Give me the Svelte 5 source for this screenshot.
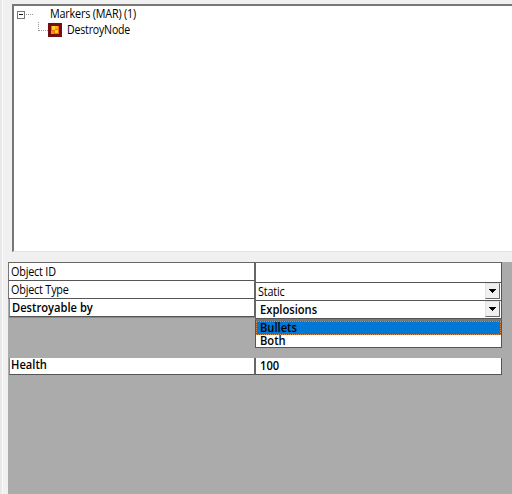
<script lang="ts">
  type Option = { label: string; active: boolean }

  let objectType = $state('Static')
  let destroyableBy = $state('Explosions')
  let health = $state(100)

  const options: Option[] = [
    { label: 'Bullets', active: true },
    { label: 'Both', active: false },
  ]
</script>

{#snippet arrow()}
  <div class="arrow">
    <svg width="7" height="4" viewBox="0 0 7 4" shape-rendering="crispEdges">
      <path d="M0 0H7V1H6V2H5V3H4V4H3V3H2V2H1V1H0Z" fill="#000" />
    </svg>
  </div>
{/snippet}

<div class="window">
  <div class="tree">
    <div class="node root">
      <svg width="16" height="18" viewBox="0 0 16 18" shape-rendering="crispEdges">
        <rect x="0.5" y="5.5" width="7" height="7" fill="#fff" stroke="#777" />
        <path d="M2 8.5H6" stroke="#111" />
        <path d="M9 8.5H16" stroke="#999" stroke-dasharray="1 1" />
      </svg>
      <span>Markers (MAR) (1)</span>
    </div>
    <div class="node child">
      <svg width="25" height="16" viewBox="0 0 25 16" shape-rendering="crispEdges">
        <path d="M0.5 0V9M1 8.5H10" fill="none" stroke="#999" stroke-dasharray="1 1" />
        <rect x="10" y="1" width="14" height="14" fill="#780d10" />
        <rect x="13" y="4" width="8" height="8" fill="#f06b0c" />
        <path d="M14 4H17V8H14ZM17 8H20V11H17Z" fill="#ffd51c" />
        <path d="M17 4H20V7H17Z" fill="#ffae12" />
        <path d="M13 9H16V12H13Z" fill="#f79313" />
      </svg>
      <span>DestroyNode</span>
    </div>
  </div>

  <div class="grid">
    <div class="names">
      <div class="cell first"><span>Object ID</span></div>
      <div class="cell"><span>Object Type</span></div>
      <div class="cell strong destroy"><span>Destroyable by</span></div>
      <div class="cell strong health"><span>Health</span></div>
    </div>
    <div class="values">
      <div class="cell empty"></div>
      <div class="cell combo"><span>{objectType}</span>{@render arrow()}</div>
      <div class="cell combo strong"><span>{destroyableBy}</span>{@render arrow()}</div>
      <div class="list strong">
        {#each options as option}
          <div class="option" class:active={option.active}><span>{option.label}</span></div>
        {/each}
      </div>
      <div class="cell strong amount"><span>{health}</span></div>
    </div>
  </div>
</div>

<style>
  .window {
    box-sizing: border-box;
    height: 494px;
    padding: 4px 0 0 8px;
    overflow: hidden;
    background: linear-gradient(90deg, #e9e9e9 0 2px, #fafafa 2px 3px, #f0f0f0 3px);
    color: #000;
    font: 12px/16px "Open Sans", "Noto Sans", sans-serif;
    letter-spacing: -0.2px;
    white-space: nowrap;
  }

  /* slightly condensed UI text */
  span {
    display: inline-block;
    vertical-align: top;
    transform: scaleX(0.9);
    transform-origin: left;
  }

  .tree {
    box-sizing: border-box;
    height: 248px;
    margin-left: 4px;
    padding: 0 0 0 3px;
    border: 2px solid #696969;
    border-top-color: #777;
    border-left-color: #777;
    border-right: 0;
    border-bottom: 1px solid #e3e3e3;
    background: #fff;
  }

  .node {
    display: flex;
    height: 16px;
  }

  .root {
    gap: 17px;
  }

  .child {
    margin-left: 21px;
    gap: 4px;
  }

  .child span {
    transform: scaleX(0.88);
  }

  svg {
    display: block;
    flex: none;
  }

  .grid {
    display: flex;
    height: 232px;
    margin-top: 10px;
    background: #ababab;
  }

  .cell {
    box-sizing: border-box;
    height: 18px;
    padding-left: 2px;
    border-bottom: 1px solid #555;
    background: #fff;
  }

  .names {
    width: 247px;
  }

  .names .cell {
    border-left: 1px solid #777;
    border-right: 1px solid #666;
    line-height: 17px;
  }

  .names .first {
    height: 19px;
    border-top: 1px solid #666;
    line-height: 17px;
  }

  .strong {
    font-weight: 600;
    letter-spacing: 0;
  }

  .strong span {
    transform: scaleX(0.93);
  }

  .names .strong {
    margin-left: 1px;
    border-left-color: #888;
  }

  .names .destroy {
    padding-left: 2px;
    line-height: 17px;
    box-shadow: 0 1px #888;
  }

  .names .health {
    height: 17px;
    margin-top: 41px;
    padding-left: 1px;
    line-height: 14px;
  }

  .values {
    width: 247px;
  }

  .values .cell {
    border-left: 1px solid #666;
    border-right: 1px solid #555;
  }

  .values .empty {
    height: 21px;
    border-top: 1px solid #666;
  }

  .combo {
    display: flex;
    justify-content: space-between;
    line-height: 17px;
  }

  .values .cell.strong {
    padding-left: 4px;
  }

  .arrow {
    box-sizing: border-box;
    display: grid;
    place-items: center;
    width: 15px;
    height: 16px;
    margin-right: 1px;
    border: 1px solid #e3e3e3;
    border-right: 1px solid #696969;
    border-bottom: 1px solid #696969;
    background: #f0f0f0;
  }

  .list {
    box-sizing: border-box;
    height: 29px;
    border: 1px solid #555;
    border-top: 2px solid #777;
    background: #fff;
  }

  .option {
    box-sizing: border-box;
    height: 12px;
    padding-left: 3px;
    border: 1px solid transparent;
    line-height: 9px;
  }

  .active {
    height: 14px;
    border: 1px dotted #d58a50;
    background: #0078d7;
    line-height: 12px;
  }

  .values .amount {
    height: 17px;
    margin-top: 10px;
    line-height: 16px;
  }
</style>
